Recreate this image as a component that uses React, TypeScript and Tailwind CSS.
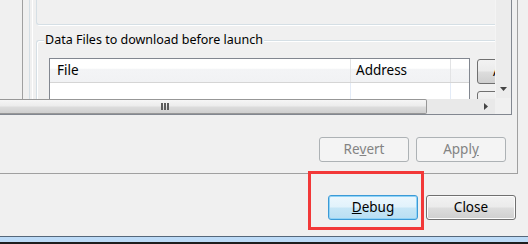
import React from 'react';

const font = { fontFamily: '"Noto Sans", "Open Sans", sans-serif' };

const WinButton: React.FC<{ children: React.ReactNode; disabled?: boolean; focused?: boolean }> = ({ children, disabled, focused }) => {
    if (disabled) {
        return (
            <div className="w-[90px] h-[25px] rounded-[3px] border border-[#adb2b5] bg-[#f4f4f4] flex items-center justify-center text-[13.5px] text-[#838383]">
                {children}
            </div>
        );
    }
    if (focused) {
        return (
            <div className="w-[90px] h-[25px] rounded-[3px] border border-[#3c9ad6] shadow-[inset_0_0_0_1px_#8fd3f7] bg-[linear-gradient(#ecf7fd_0%,#e1f2fb_48%,#c6e6f6_52%,#b9dff3_100%)] flex items-center justify-center text-[13.5px] text-black">
                {children}
            </div>
        );
    }
    return (
        <div className="w-[90px] h-[25px] rounded-[3px] border border-[#707070] shadow-[inset_0_0_0_1px_#fcfcfc] bg-[linear-gradient(#f2f2f2_0%,#ebebeb_48%,#dddddd_52%,#cfcfcf_100%)] flex items-center justify-center text-[13.5px] text-black">
            {children}
        </div>
    );
};

export default function App() {
    return (
        <div className="relative w-[528px] h-[244px] overflow-hidden bg-[#f0f0f0] flex flex-col" style={font}>
            {/* outer panel */}
            <div className="w-[518px] h-[174px] shrink-0 border-r border-b border-[#a0a0a0] flex flex-col">
                {/* scrolled inner pane */}
                <div className="w-[512px] h-[115px] shrink-0 border-r border-b border-[#828790] flex flex-col">
                    <div className="flex h-[99px] shrink-0">
                        <div className="w-[495px] h-[99px] overflow-hidden flex">
                            <div className="w-[22px] shrink-0" />
                            <div className="w-px shrink-0 bg-[#a0a0a0]" />
                            <div className="w-[6px] shrink-0" />
                            <div className="w-px shrink-0 bg-[#d5dfe5]" />
                            <div className="w-[2px] shrink-0" />
                            <div className="w-px shrink-0 bg-white" />
                            <div className="w-[3px] shrink-0" />
                            <div className="flex flex-col shrink-0">
                                <div className="w-[459px] h-[25px] shrink-0 border-l border-b border-[#d5dfe5] rounded-bl-[3px] shadow-[1px_1px_0_#fff]" />
                                <div className="relative mt-[15px] w-[459px] h-[80px] shrink-0 border-l border-t border-[#d5dfe5] rounded-tl-[3px] shadow-[inset_1px_1px_0_#fff] pl-[12px] pt-[17px] flex gap-[7px]">
                                    <div className="absolute -top-[11px] left-[7px] px-[1px] bg-[#f0f0f0] text-[12.5px] leading-[20px] text-black whitespace-nowrap">
                                        Data Files to download before launch
                                    </div>
                                    {/* table */}
                                    <div className="w-[421px] h-[60px] shrink-0 border border-[#828790] bg-white flex flex-col">
                                        <div className="flex h-[24px] shrink-0 border-b border-[#d5d5d5] bg-[linear-gradient(#ffffff_0%,#ffffff_40%,#f3f4f6_45%,#f1f2f4_100%)] text-[13.5px] text-black">
                                            <div className="w-[301px] pl-[7px] flex items-center border-r border-[#e2e3e5]">File</div>
                                            <div className="w-[100px] pl-[5px] flex items-center border-r border-[#e2e3e5]">Address</div>
                                            <div className="flex-1" />
                                        </div>
                                        <div className="flex flex-1">
                                            <div className="w-[301px] border-r border-[#e3ebf7]" />
                                            <div className="w-[100px] border-r border-[#e3ebf7]" />
                                        </div>
                                    </div>
                                    {/* side buttons */}
                                    <div className="flex flex-col gap-[7px] pt-px">
                                        <div className="w-[80px] h-[25px] shrink-0 rounded-[3px] border border-[#707070] bg-[linear-gradient(#f2f2f2_0%,#ebebeb_48%,#dddddd_52%,#cfcfcf_100%)] text-[13.5px] leading-[23px] pl-[15px] text-black">
                                            Add
                                        </div>
                                        <div className="w-[80px] h-[25px] shrink-0 rounded-[3px] border border-[#707070] bg-[linear-gradient(#f2f2f2_0%,#ebebeb_48%,#dddddd_52%,#cfcfcf_100%)]" />
                                    </div>
                                </div>
                            </div>
                        </div>
                        {/* vertical scrollbar */}
                        <div className="w-[16px] h-[98px] bg-[#ececec] border-l border-[#f4f4f4] flex flex-col justify-end items-center pb-[7px]">
                            <svg width="7" height="4" viewBox="0 0 7 4">
                                <path d="M0 0 L7 0 L3.5 4 Z" fill="#444" />
                            </svg>
                        </div>
                    </div>
                    {/* horizontal scrollbar */}
                    <div className="flex h-[15px] shrink-0">
                        <div className="w-[495px] flex bg-[#e9e9e9]">
                            <div className="w-[427px] h-[15px] border-y border-r border-[#979797] rounded-r-[2px] bg-[linear-gradient(#f6f6f6_0%,#ececec_45%,#dcdcdc_55%,#cfcfcf_100%)] flex items-center justify-center">
                                <div className="flex gap-[1px] ml-[-97px]">
                                    <div className="w-[2px] h-[7px] bg-[#5c5c5c]" />
                                    <div className="w-[2px] h-[7px] bg-[#5c5c5c]" />
                                    <div className="w-[2px] h-[7px] bg-[#5c5c5c]" />
                                </div>
                            </div>
                            <div className="flex-1 flex items-center justify-end pr-[7px]">
                                <svg width="4" height="7" viewBox="0 0 4 7">
                                    <path d="M0 0 L4 3.5 L0 7 Z" fill="#444" />
                                </svg>
                            </div>
                        </div>
                        <div className="w-[16px] bg-[#f0f0f0]" />
                    </div>
                </div>
                <div className="flex justify-end gap-[7px] pr-[11px] mt-[22px]">
                    <WinButton disabled>Re<span className="underline">v</span>ert</WinButton>
                    <WinButton disabled>Appl<span className="underline">y</span></WinButton>
                </div>
            </div>
            <div className="flex justify-end gap-[8px] pr-[12px] mt-[21px]">
                <WinButton focused><span className="underline">D</span>ebug</WinButton>
                <WinButton>Close</WinButton>
            </div>
            <div className="flex-1" />
            <div className="h-[8px] shrink-0 border-t border-[#56687b] bg-[#bddbf7] border-b-2 border-b-[#1e1e1e]" />
            {/* red annotation */}
            <div className="absolute left-[308px] top-[171px] w-[116px] h-[59px] border-[3px] border-[#f23838]" />
        </div>
    );
}
